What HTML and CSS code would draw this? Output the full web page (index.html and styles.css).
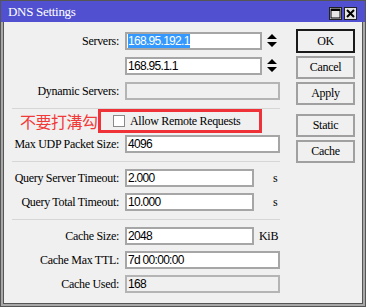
FILE: index.html
```html
<!DOCTYPE html>
<html lang="en">

<head>
    <meta charset="UTF-8">
    <meta name="viewport" content="width=device-width, initial-scale=1.0">
    <title>DNS Settings</title>
    <link rel="stylesheet" href="styles.css">
</head>

<body>
    <div class="ventana">
        <div class="titulo">
            <span class="titulo-texto">DNS Settings</span>
            <div class="titulo-botones">
                <span class="tbtn">
                    <svg width="11" height="11" viewBox="0 0 11 11"><rect x="1" y="1" width="9" height="9" fill="none" stroke="#000" stroke-width="1"/><rect x="1" y="1" width="9" height="2" fill="#000"/></svg>
                </span>
                <span class="tbtn">
                    <svg width="11" height="11" viewBox="0 0 11 11"><path d="M2 2 L9 9 M9 2 L2 9" stroke="#000" stroke-width="2"/></svg>
                </span>
            </div>
        </div>

        <div class="cliente">
            <div class="formulario">
                <div class="grupo grupo-primero">
                    <div class="fila">
                        <label class="etiqueta">Servers:</label>
                        <div class="campo medio"><span class="seleccion">168.95.192.1</span></div>
                        <svg class="flechas" width="10" height="14" viewBox="0 0 10 14"><path d="M5 0 L10 5 L0 5 Z M0 8 L10 8 L5 13 Z" fill="#000"/></svg>
                    </div>
                    <div class="fila">
                        <label class="etiqueta"></label>
                        <div class="campo medio">168.95.1.1</div>
                        <svg class="flechas" width="10" height="14" viewBox="0 0 10 14"><path d="M5 0 L10 5 L0 5 Z M0 8 L10 8 L5 13 Z" fill="#000"/></svg>
                    </div>
                    <div class="fila">
                        <label class="etiqueta">Dynamic Servers:</label>
                        <div class="campo largo apagado"></div>
                    </div>
                </div>

                <div class="separador"></div>

                <div class="fila-check">
                    <span class="nota">不要打溝勾</span>
                    <div class="marca">
                        <span class="casilla"></span>
                        <span>Allow Remote Requests</span>
                    </div>
                </div>

                <div class="grupo grupo-udp">
                    <div class="fila">
                        <label class="etiqueta">Max UDP Packet Size:</label>
                        <div class="campo largo">4096</div>
                    </div>
                </div>

                <div class="separador"></div>

                <div class="grupo">
                    <div class="fila">
                        <label class="etiqueta">Query Server Timeout:</label>
                        <div class="campo corto">2.000</div>
                        <span class="unidad">s</span>
                    </div>
                    <div class="fila">
                        <label class="etiqueta">Query Total Timeout:</label>
                        <div class="campo corto">10.000</div>
                        <span class="unidad">s</span>
                    </div>
                </div>

                <div class="separador"></div>

                <div class="grupo">
                    <div class="fila">
                        <label class="etiqueta">Cache Size:</label>
                        <div class="campo corto">2048</div>
                        <span class="unidad kib">KiB</span>
                    </div>
                    <div class="fila">
                        <label class="etiqueta">Cache Max TTL:</label>
                        <div class="campo largo">7d 00:00:00</div>
                    </div>
                    <div class="fila">
                        <label class="etiqueta">Cache Used:</label>
                        <div class="campo largo apagado">168</div>
                    </div>
                </div>
            </div>

            <div class="botones">
                <button class="boton principal">OK</button>
                <button class="boton">Cancel</button>
                <button class="boton">Apply</button>
                <button class="boton separado">Static</button>
                <button class="boton">Cache</button>
            </div>
        </div>
    </div>
</body>

</html>
```

FILE: styles.css
```css
html,
body {
    margin: 0;
    padding: 0;
}

body {
    font-family: "Liberation Serif", "Times New Roman", serif;
    font-size: 12px;
    letter-spacing: -0.3px;
    color: #000;
}

.ventana {
    width: 366px;
    height: 307px;
    box-sizing: border-box;
    border: 1px solid #555;
    background-color: #a8a8a8;
    display: flex;
    flex-direction: column;
}

.titulo {
    height: 21px;
    background-color: #5050d0;
    color: #fff;
    display: flex;
    align-items: center;
    justify-content: space-between;
    padding: 0 8px 0 7px;
}

.titulo-texto {
    font-size: 13px;
    padding-top: 1px;
}

.titulo-botones {
    display: flex;
    gap: 2px;
    margin-top: 3px;
}

.tbtn {
    width: 13px;
    height: 13px;
    box-sizing: border-box;
    border: 1px solid #222;
    background-color: #e6e6e6;
    display: flex;
    align-items: center;
    justify-content: center;
}

.cliente {
    flex: 1;
    margin: 0 2px 2px;
    border: 1px solid #555;
    border-top: none;
    background-color: #f0f0f0;
    display: flex;
    align-items: flex-start;
}

.formulario {
    padding: 10px 0 0 8px;
    width: 268px;
}

.grupo {
    display: flex;
    flex-direction: column;
    gap: 6px;
}

.grupo-primero {
    gap: 7px;
}

.grupo-udp {
    margin-top: 2px;
}

.fila {
    display: flex;
    align-items: center;
    height: 18px;
}

.etiqueta {
    width: 107px;
    text-align: right;
    margin-right: 6px;
    flex-shrink: 0;
}

.campo {
    height: 18px;
    box-sizing: border-box;
    border: 2px solid #a6a6a6;
    background-color: #fff;
    font-family: "Liberation Sans", Arial, sans-serif;
    font-size: 12px;
    letter-spacing: -0.7px;
    line-height: 14px;
    padding-left: 1px;
    white-space: nowrap;
    overflow: hidden;
}

.largo {
    width: 155px;
}

.medio {
    width: 137px;
}

.corto {
    width: 129px;
}

.apagado {
    background-color: #f0f0f0;
    border-color: #b4b4b4;
}

.seleccion {
    background-color: #3399ff;
    color: #fff;
}

.flechas {
    margin-left: 5px;
}

.unidad {
    margin-left: 19px;
}

.kib {
    margin-left: 5px;
}

.separador {
    height: 1px;
    background-color: #d6d6d6;
    margin: 8px 0 0;
}

.separador + .grupo {
    margin-top: 7px;
}

.fila-check {
    display: flex;
    align-items: center;
    height: 24px;
}

.nota {
    font-family: "Noto Sans CJK TC", "Noto Sans CJK SC", sans-serif;
    font-size: 16px;
    letter-spacing: -0.5px;
    color: #f03a3a;
    width: 86px;
    box-sizing: border-box;
    padding-left: 8px;
    white-space: nowrap;
    flex-shrink: 0;
}

.marca {
    width: 164px;
    height: 24px;
    box-sizing: border-box;
    border: 3px solid #ee3238;
    display: flex;
    align-items: center;
    padding-left: 12px;
    gap: 5px;
}

.casilla {
    width: 12px;
    height: 12px;
    box-sizing: border-box;
    border: 1px solid #8a8a8a;
    background-color: #fff;
}

.botones {
    display: flex;
    flex-direction: column;
    gap: 3px;
    padding-top: 7px;
    margin-left: 16px;
}

.boton {
    width: 59px;
    height: 23px;
    box-sizing: border-box;
    border: 2px solid #a0a0a0;
    background-color: #f0f0f0;
    font-family: "Liberation Serif", "Times New Roman", serif;
    font-size: 12px;
    letter-spacing: -0.3px;
    color: #000;
    padding: 0;
    cursor: pointer;
}

.principal {
    height: 24px;
    border-color: #1a1a1a;
}

.separado {
    margin-top: 6px;
}
```
